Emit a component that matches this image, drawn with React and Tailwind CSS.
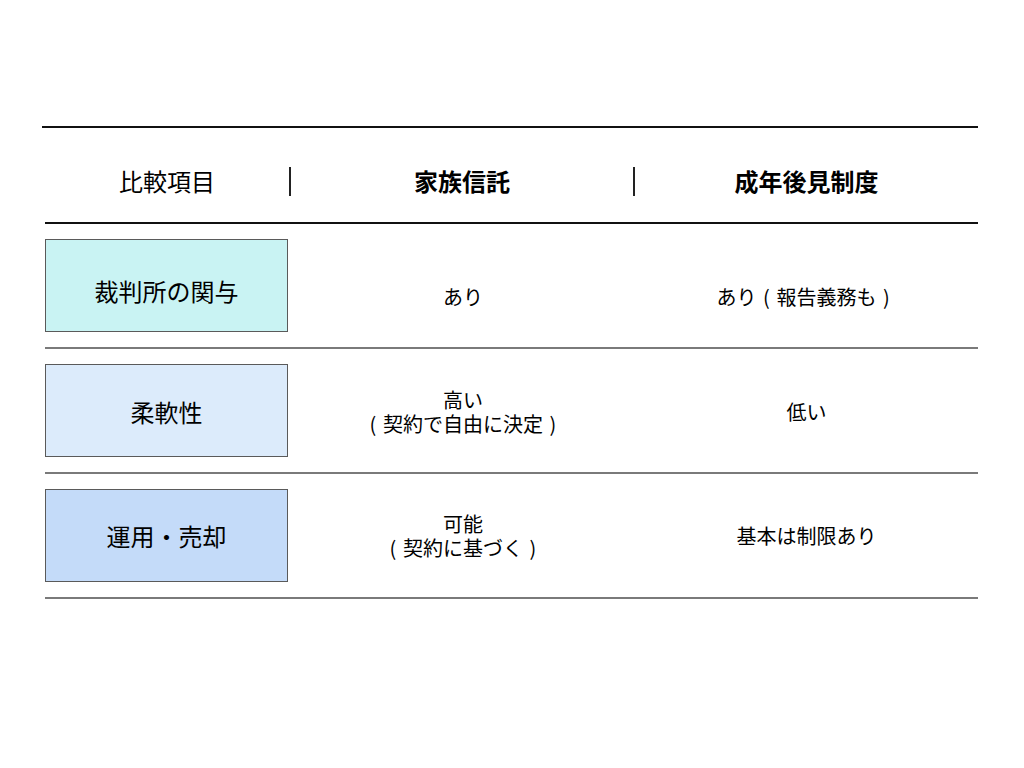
function P({ c }) {
  return <span className="inline-block w-[1em] text-center">{c}</span>;
}

function Txt({ s }) {
  // render full-width parens centred in an em cell, like the reference font
  const parts = [];
  let buf = "";
  for (const ch of s) {
    if (ch === "（" || ch === "）") {
      if (buf) parts.push(buf);
      buf = "";
      parts.push(<P key={parts.length} c={ch === "（" ? "(" : ")"} />);
    } else buf += ch;
  }
  if (buf) parts.push(buf);
  return <>{parts}</>;
}

export default function App() {
  const font = { fontFamily: '"Noto Sans CJK JP", "Noto Sans", sans-serif' };
  const rows = [
    {
      label: "裁判所の関与",
      bg: "bg-[#c9f3f3]",
      a: ["あり"],
      b: ["あり（報告義務も）"],
      labelPad: "pt-[10px]",
      textPad: "pt-[22px]",
    },
    {
      label: "柔軟性",
      bg: "bg-[#dcebfb]",
      a: ["高い", "（契約で自由に決定）"],
      b: ["低い"],
      labelPad: "pt-[2px]",
      textPad: "pt-[2px]",
    },
    {
      label: "運用・売却",
      bg: "bg-[#c4dbf9]",
      a: ["可能", "（契約に基づく）"],
      b: ["基本は制限あり"],
      labelPad: "pt-0",
      textPad: "pt-0",
    },
  ];
  const cell = (lines) => (
    <div className="text-center">
      {lines.map((t, j) => (
        <span key={j}>
          {j > 0 && <br />}
          <Txt s={t} />
        </span>
      ))}
    </div>
  );
  return (
    <div className="w-[1024px] h-[768px] bg-white text-black" style={font}>
      <div className="pt-[126px] pl-[42px] w-[978px]">
        <div className="h-[2px] bg-[#111]" />
        <div className="ml-[3px] h-[94px] pt-[12px] flex items-center">
          <div className="w-[244px] text-center text-[24px] leading-[30px]">比較項目</div>
          <div className="w-[2px] h-[29px] bg-[#222]" />
          <div className="w-[342px] text-center text-[24px] leading-[30px] font-bold">家族信託</div>
          <div className="w-[2px] h-[29px] bg-[#222]" />
          <div className="flex-1 text-center text-[24px] leading-[30px] font-bold">成年後見制度</div>
        </div>
        <div className="ml-[3px] h-[2px] bg-[#111]" />
        {rows.map((r, i) => (
          <div key={i} className="ml-[3px]">
            <div className="flex items-center py-[15px]">
              <div
                className={`w-[243px] h-[93px] ${r.bg} border border-[#5a5a5a] flex items-center justify-center text-[24px] leading-[30px] ${r.labelPad}`}
              >
                {r.label}
              </div>
              <div className="w-[3px]" />
              <div className={`w-[344px] flex justify-center text-[20px] leading-[24px] ${r.textPad}`}>
                {cell(r.a)}
              </div>
              <div className={`flex-1 flex justify-center text-[20px] leading-[24px] ${r.textPad}`}>
                {cell(r.b)}
              </div>
            </div>
            <div className="h-[2px] bg-[#7a7a7a]" />
          </div>
        ))}
      </div>
    </div>
  );
}
